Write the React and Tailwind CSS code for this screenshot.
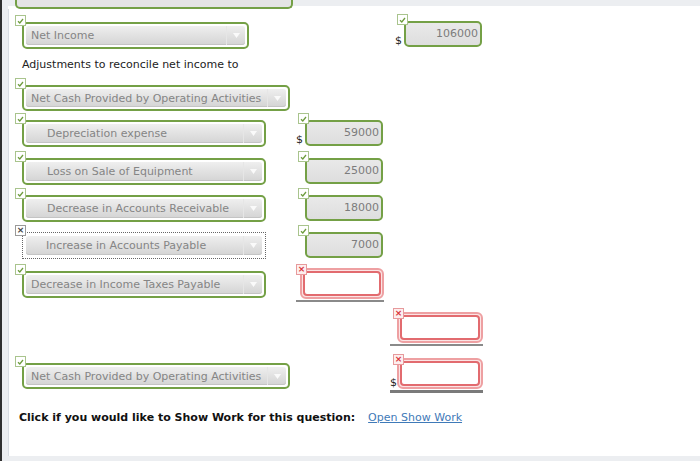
import React from 'react';

// small status badge that sits over a field's top-left corner
function Mark({ state }) {
  if (state === 'bad') {
    return (
      <span className="absolute left-0 top-0 z-10 flex h-[11px] w-[11px] items-center justify-center border border-[#e79a9c] bg-[#fdeeee] text-[9px] leading-none font-bold text-[#d8343b]">
        ×
      </span>
    );
  }
  if (state === 'x') {
    return (
      <span className="absolute left-0 top-0 z-10 flex h-[11px] w-[11px] items-center justify-center border border-[#9a9a9a] bg-white text-[9px] leading-none font-bold text-[#444]">
        ×
      </span>
    );
  }
  return (
    <span className="absolute left-0 top-0 z-10 flex h-[11px] w-[11px] items-center justify-center border border-[#a9c48d] bg-white">
      <svg width="7" height="6" viewBox="0 0 7 6">
        <path d="M1 3.2 L2.8 5 L6 1" fill="none" stroke="#6e9c3e" strokeWidth="1.3" />
      </svg>
    </span>
  );
}

function Select({ label, box, pad = 'pl-[5px]', mark = 'ok', dotted = false }) {
  const frame = dotted
    ? 'border border-dotted border-[#666] p-[3px]'
    : 'border-2 border-[#74a046] rounded-[5px] p-[2px]';
  return (
    <div className="relative pl-[7px] pt-[7px]">
      <Mark state={mark} />
      <div className={`${box} ${frame}`}>
        <div className="flex h-full rounded-[3px] bg-gradient-to-b from-[#efefef] to-[#d4d4d4] shadow-[inset_0_-1px_0_#c4c4c4]">
          <span className={`flex flex-1 items-center pt-[2px] text-[11px] text-[#858585] ${pad}`}>{label}</span>
          <span className="flex w-[19px] items-center justify-center border-l border-[#e6e6e6]">
            <svg width="7" height="5" viewBox="0 0 7 5">
              <path d="M0 0 H7 L3.5 5 Z" fill="#fafafa" />
            </svg>
          </span>
        </div>
      </div>
    </div>
  );
}

function Amount({ value, dollar = false }) {
  return (
    <div className="relative pl-[7px] pt-[7px]">
      <Mark state="ok" />
      {dollar && (
        <span className="absolute bottom-[1px] left-[-2px] text-[11px] leading-none text-[#222]">$</span>
      )}
      <div className="flex h-[26px] w-[78px] items-center justify-end rounded-[5px] border-2 border-[#74a046] bg-gradient-to-b from-[#e9e9e9] to-[#dedede] pr-[2px] text-[11px] text-[#7c7c7c]">
        {value}
      </div>
    </div>
  );
}

function Blank({ dollar = false, line = 'h-[2px] bg-[#8a8a8a]', width = 'w-[84px]', lineWidth = 'w-[88px]' }) {
  return (
    <div className="flex flex-col items-end">
      <div className="relative pl-[4px] pt-[4px]">
        <Mark state="bad" />
        {dollar && (
          <span className="absolute bottom-[1px] left-[-3px] text-[11px] leading-none text-[#222]">$</span>
        )}
        <div className={`h-[31px] ${width} rounded-[6px] border-2 border-[#eea0a2] bg-[#fbe4e4] p-[1px]`}>
          <div className="h-full rounded-[4px] border-2 border-[#e26b6f] bg-white" />
        </div>
      </div>
      <div className={`mt-[1px] ${lineWidth} ${line}`} />
    </div>
  );
}

export default function App() {
  return (
    <div
      className="flex h-[461px] w-[700px] overflow-hidden bg-[#eceef1]"
      style={{ fontFamily: '"DejaVu Sans", Verdana, sans-serif' }}
    >
      <div className="w-[2px] bg-[#2f2f2f]" />
      <div className="mb-[5px] ml-[6px] flex flex-1 flex-col border-l border-[#d9dde3] bg-white pl-[6px]">
        {/* tail end of the row above */}
        <div className="-ml-[7px] h-[9px] bg-[linear-gradient(#eceef1_6px,white_6px)]">
          <div className="ml-[7px] h-[9px] w-[278px] rounded-b-[5px] border-2 border-t-0 border-[#74a046] bg-[#e4e4e4]" />
        </div>

        <div className="mt-[5px] flex items-start">
          <div className="mt-[1px]">
            <Select label="Net Income" box="h-[27px] w-[227px]" />
          </div>
          <div className="ml-[148px]">
            <Amount value="106000" dollar />
          </div>
        </div>

        <p className="mt-[9px] pl-[7px] text-[11px] leading-[14px] text-[#222]">
          Adjustments to reconcile net income to
        </p>

        <div className="mt-[6px]">
          <Select label="Net Cash Provided by Operating Activities" box="h-[26px] w-[268px]" />
        </div>

        <div className="mt-[2px] flex items-start">
          <Select label="Depreciation expense" box="h-[27px] w-[244px]" pad="pl-[21px]" />
          <div className="ml-[32px]">
            <Amount value="59000" dollar />
          </div>
        </div>

        <div className="mt-[4px] flex items-start">
          <Select label="Loss on Sale of Equipment" box="h-[27px] w-[244px]" pad="pl-[21px]" />
          <div className="ml-[32px]">
            <Amount value="25000" />
          </div>
        </div>

        <div className="mt-[3px] flex items-start">
          <Select label="Decrease in Accounts Receivable" box="h-[27px] w-[244px]" pad="pl-[21px]" />
          <div className="ml-[32px]">
            <Amount value="18000" />
          </div>
        </div>

        <div className="mt-[3px] flex items-start">
          <Select label="Increase in Accounts Payable" box="h-[27px] w-[244px]" pad="pl-[20px]" mark="x" dotted />
          <div className="ml-[32px]">
            <Amount value="7000" />
          </div>
        </div>

        <div className="mt-[5px] flex items-start">
          <Select label="Decrease in Income Taxes Payable" box="h-[27px] w-[244px]" />
          <div className="ml-[30px]">
            <Blank width="w-[84px]" lineWidth="w-[88px]" />
          </div>
        </div>

        <div className="mt-[6px] flex">
          <div className="ml-[375px]">
            <Blank width="w-[86px]" lineWidth="w-[93px]" />
          </div>
        </div>

        <div className="mt-[8px] flex items-start">
          <div className="mt-[2px]">
            <Select label="Net Cash Provided by Operating Activities" box="h-[26px] w-[268px]" />
          </div>
          <div className="ml-[100px]">
            <Blank dollar width="w-[86px]" lineWidth="w-[93px]" line="h-[3px] bg-[#7a7a7a]" />
          </div>
        </div>

        <div className="mt-[18px] flex items-center pl-[4px] text-[11px] leading-[14px]">
          <span className="font-bold text-[#111]">Click if you would like to Show Work for this question:</span>
          <a href="#" className="ml-[13px] text-[11px] text-[#3f7ab8] underline">
            Open Show Work
          </a>
        </div>
      </div>
    </div>
  );
}
